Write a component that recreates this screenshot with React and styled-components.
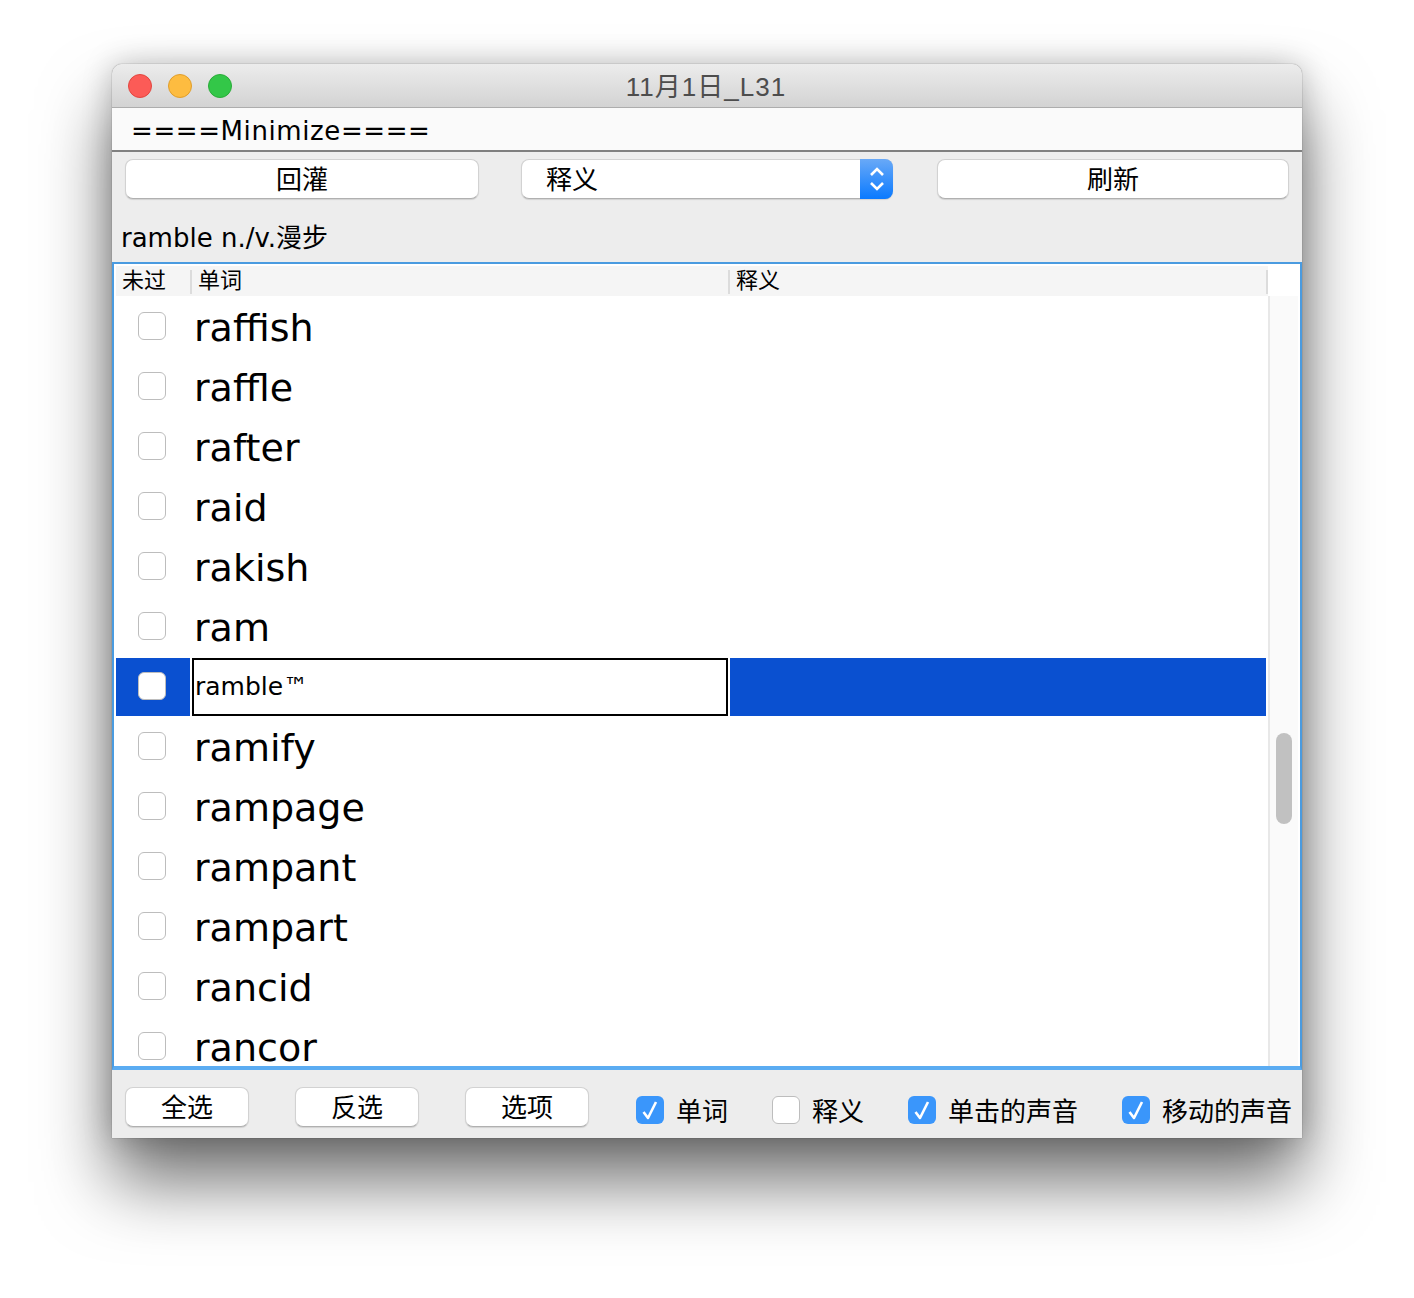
import React from "react";
import styled, { createGlobalStyle } from "styled-components";

const FONT = `"DejaVu Sans", "Noto Sans CJK SC", sans-serif`;

const Global = createGlobalStyle`
  html, body { margin: 0; padding: 0; background: #fff; }
  body { font-family: ${FONT}; color: #000; }
`;

const Page = styled.div`
  width: 1414px;
  height: 1298px;
  padding: 64px 0 0 112px;
  box-sizing: border-box;
  overflow: hidden;
`;

const Win = styled.div`
  width: 1190px;
  height: 1074px;
  display: flex;
  flex-direction: column;
  background: #ededed;
  border-radius: 10px 10px 0 0;
  box-shadow: 0 44px 70px rgba(0, 0, 0, 0.56), 0 0 30px rgba(0, 0, 0, 0.22), 0 0 1px rgba(0, 0, 0, 0.7);
`;

const TitleBar = styled.div`
  height: 43px;
  flex: none;
  display: flex;
  align-items: center;
  position: relative;
  padding-left: 16px;
  gap: 16px;
  border-radius: 10px 10px 0 0;
  background: linear-gradient(#ececec, #d3d3d3);
  border-bottom: 1px solid #adadad;
`;

const Light = styled.span`
  width: 24px;
  height: 24px;
  border-radius: 50%;
  box-sizing: border-box;
  background: ${(p) => p.$c};
  border: 1px solid ${(p) => p.$b};
`;

const Title = styled.div`
  position: absolute;
  left: -2px;
  right: 0;
  top: 5px;
  text-align: center;
  font-size: 26px;
  line-height: 36px;
  color: #4d4d4d;
  letter-spacing: 1px;
  font-family: "Liberation Sans", "Noto Sans CJK SC", sans-serif;
`;

const MenuBar = styled.div`
  height: 42px;
  flex: none;
  background: #fafafa;
  border-bottom: 2px solid #808080;
  padding-left: 19px;
  font-size: 26px;
  line-height: 46px;
  letter-spacing: 0.6px;
`;

const ToolBar = styled.div`
  display: flex;
  flex: none;
  padding: 7px 13px 0;
`;

const Btn = styled.div`
  width: ${(p) => p.$w}px;
  height: 40px;
  flex: none;
  box-sizing: border-box;
  background: #fff;
  border-radius: 8px;
  border: 1px solid #d2d2d2;
  border-bottom-color: #b0b0b0;
  box-shadow: 0 1px 1px rgba(0, 0, 0, 0.12);
  display: flex;
  align-items: center;
  justify-content: center;
  font-size: 26px;
  padding-bottom: 3px;
  margin-right: ${(p) => p.$mr || 0}px;
`;

const Select = styled(Btn)`
  justify-content: flex-start;
  padding-left: 24px;
  position: relative;
`;

const Stepper = styled.div`
  position: absolute;
  right: -1px;
  top: -1px;
  bottom: -1px;
  width: 33px;
  border-radius: 0 8px 8px 0;
  background: linear-gradient(#69a9f7, #0a7aff);
  display: flex;
  align-items: center;
  justify-content: center;
`;

const Info = styled.div`
  flex: none;
  height: 63px;
  padding-left: 9px;
  font-size: 26px;
  line-height: 78px;
  box-sizing: border-box;
`;

const TableBox = styled.div`
  flex: none;
  height: 808px;
  box-sizing: border-box;
  border: 2px solid #4a9be0;
  border-bottom: 4px solid #5bacf2;
  background: #fff;
  display: flex;
  flex-direction: column;
  overflow: hidden;
  padding-left: 2px;
`;

const Header = styled.div`
  flex: none;
  height: 30px;
  margin-top: 2px;
  width: 1152px;
  display: grid;
  grid-template-columns: 76px 538px 538px;
  background: #f5f5f5;
`;

const HeadCell = styled.div`
  font-size: 22px;
  line-height: 29px;
  padding-left: ${(p) => p.$pl}px;
  position: relative;
  &::after {
    content: "";
    position: absolute;
    right: 0;
    top: 4px;
    bottom: 2px;
    width: 2px;
    background: #dcdcdc;
  }
`;

const Body = styled.div`
  flex: 1;
  min-height: 0;
  display: flex;
`;

const Rows = styled.div`
  width: 1152px;
  flex: none;
  overflow: hidden;
`;

const Row = styled.div`
  height: 60px;
  display: flex;
  align-items: center;
`;

const SelRow = styled.div`
  height: 58px;
  margin-top: 2px;
  display: grid;
  grid-template-columns: 74px 536px 536px;
  column-gap: 2px;
  background: #fff;
`;

const BlueCell = styled.div`
  background: #0a50d0;
  display: flex;
  align-items: center;
  padding-bottom: 2px;
`;

const Editor = styled.div`
  box-sizing: border-box;
  border: 2px solid #000;
  background: #fff;
  font-size: 25px;
  line-height: 54px;
  padding-left: 1px;
`;

const Word = styled.div`
  font-size: 38px;
  margin-left: 4px;
  line-height: 64px;
  height: 60px;
`;

const CheckCell = styled.div`
  width: 74px;
  flex: none;
  display: flex;
  align-items: center;
`;

const Box = styled.span`
  width: 28px;
  height: 28px;
  flex: none;
  box-sizing: border-box;
  margin-left: ${(p) => p.$ml ?? 22}px;
  border-radius: 6px;
  background: ${(p) => (p.$on ? "#3a96fb" : "#fff")};
  border: ${(p) => (p.$on ? "none" : "1px solid #bdbdbd")};
  display: flex;
  align-items: center;
  justify-content: center;
`;

const Track = styled.div`
  flex: none;
  width: 28px;
  background: #fafafa;
  border-left: 2px solid #e8e8e8;
  padding-top: 437px;
`;

const Thumb = styled.div`
  width: 16px;
  height: 91px;
  margin-left: 6px;
  border-radius: 8px;
  background: #c1c1c1;
`;

const Footer = styled.div`
  flex: 1;
  display: flex;
  padding: 17px 13px 0;
`;

const Opt = styled.div`
  display: flex;
  flex: none;
  height: 46px;
  align-items: center;
  margin-right: ${(p) => p.$mr}px;
  margin-left: ${(p) => p.$ml || 0}px;
  font-size: 26px;
  white-space: nowrap;
`;

const OptLabel = styled.span`
  margin: 3px 0 0 12px;
  line-height: 46px;
`;

const Check = () => (
  <svg width="18" height="22" viewBox="0 0 18 22">
    <path d="M2.5 13 L7 19 L15 3" fill="none" stroke="#fff" strokeWidth="2.6" strokeLinejoin="round" />
  </svg>
);

const before = ["raffish", "raffle", "rafter", "raid", "rakish", "ram"];
const after = ["ramify", "rampage", "rampant", "rampart", "rancid", "rancor"];

const WordRow = ({ w }) => (
  <Row>
    <CheckCell>
      <Box />
    </CheckCell>
    <Word>{w}</Word>
  </Row>
);

export default function App() {
  return (
    <Page>
      <Global />
      <Win>
        <TitleBar>
          <Light $c="#fc5b57" $b="#e2463f" />
          <Light $c="#fdbc40" $b="#e09e2b" />
          <Light $c="#33c748" $b="#2aac39" />
          <Title>11月1日_L31</Title>
        </TitleBar>
        <MenuBar>====Minimize====</MenuBar>
        <ToolBar>
          <Btn $w={354} $mr={42}>回灌</Btn>
          <Select $w={372} $mr={44}>
            释义
            <Stepper>
              <svg width="18" height="30" viewBox="0 0 18 30">
                <path d="M3 11 L9 5 L15 11 M3 19 L9 25 L15 19" fill="none" stroke="#fff" strokeWidth="2.6" />
              </svg>
            </Stepper>
          </Select>
          <Btn $w={352}>刷新</Btn>
        </ToolBar>
        <Info>ramble n./v.漫步</Info>
        <TableBox>
          <Header>
            <HeadCell $pl={6}>未过</HeadCell>
            <HeadCell $pl={6}>单词</HeadCell>
            <HeadCell $pl={6}>释义</HeadCell>
          </Header>
          <Body>
            <Rows>
              {before.map((w) => (
                <WordRow key={w} w={w} />
              ))}
              <SelRow>
                <BlueCell>
                  <Box />
                </BlueCell>
                <Editor>ramble™</Editor>
                <BlueCell />
              </SelRow>
              {after.map((w) => (
                <WordRow key={w} w={w} />
              ))}
            </Rows>
            <Track>
              <Thumb />
            </Track>
          </Body>
        </TableBox>
        <Footer>
          <Btn $w={124} $mr={46}>全选</Btn>
          <Btn $w={124} $mr={46}>反选</Btn>
          <Btn $w={124}>选项</Btn>
          <Opt $ml={47} $mr={44}>
            <Box $on $ml={0}><Check /></Box>
            <OptLabel>单词</OptLabel>
          </Opt>
          <Opt $mr={44}>
            <Box $ml={0} />
            <OptLabel>释义</OptLabel>
          </Opt>
          <Opt $mr={44}>
            <Box $on $ml={0}><Check /></Box>
            <OptLabel>单击的声音</OptLabel>
          </Opt>
          <Opt $mr={0}>
            <Box $on $ml={0}><Check /></Box>
            <OptLabel>移动的声音</OptLabel>
          </Opt>
        </Footer>
      </Win>
    </Page>
  );
}
